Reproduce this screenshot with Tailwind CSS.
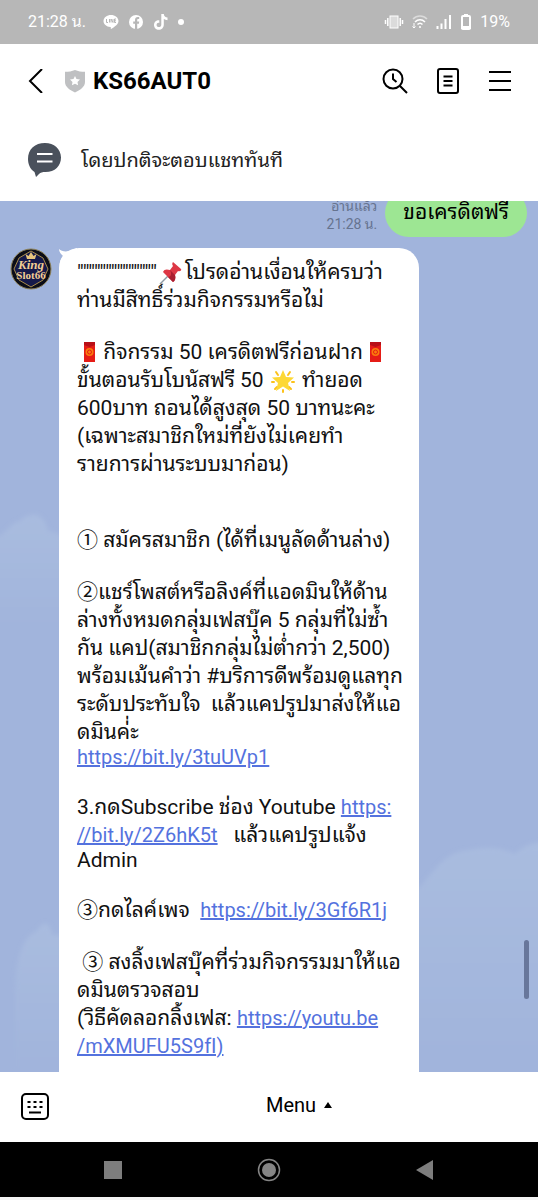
<!DOCTYPE html>
<html lang="th">
<head>
    <meta charset="UTF-8">
    <meta name="viewport" content="width=device-width, initial-scale=1.0">
    <title>KS66AUT0</title>
    <script src="https://cdn.jsdelivr.net/npm/@tailwindcss/browser@4"></script>
</head>
<body class="h-screen flex flex-col bg-white text-black font-[Roboto,'Noto_Sans_Thai_Looped','Noto_Looped_Thai',Loma,Waree,Garuda,'Noto_Sans_Thai','Noto_Sans_CJK_JP',sans-serif]">
    <!-- Status bar -->
    <div class="h-11 shrink-0 flex items-center justify-between px-7 bg-[#b7b7b7] text-white">
        <div class="flex items-center gap-[9px]">
            <span class="text-base mr-2">21:28 น.</span>
            <svg class="w-4 h-4" viewBox="0 0 16 16">
                <path fill="#fff" d="M8 1c4 0 7.500 2.600 7.500 6 0 2.200-1.600 3.900-3.500 5.300-1.500 1.200-3.100 2.400-3.800 2.700-.5.200-.5-.3-.4-.8.100-.6.100-1-.5-1.100C3.400 12.700.5 10.200.5 7 .5 3.600 4 1 8 1z"/>
                <path stroke="#b7b7b7" fill="none" d="M3.500 5v3.500H5M6.500 5v3.500M8 8.500V5l2 3.500V5M13 5h-1.500v3.500H13M11.500 6.800H13"/>
            </svg>
            <svg class="w-4 h-4" viewBox="0 0 16 16">
                <circle cx="8" cy="8" r="7" fill="#fff"/>
                <path fill="#b7b7b7" d="M7 15V9.700H5.200V7.600H7V6c0-1.900 1.100-2.900 2.700-2.900.8 0 1.500.1 1.500.1V5h-.9c-.8 0-1.100.5-1.100 1.100v1.500h2l-.3 2.100H9.200V15z"/>
            </svg>
            <svg class="w-4 h-4" viewBox="0 0 16 16">
                <path fill="#fff" d="M8.300 0h2.500c.2 2 1.500 3.400 3.700 3.600v2.600c-1.400 0-2.600-.4-3.700-1.100v5.300c0 3.200-2.300 5.400-5 5.400S1 13.500 1 10.900c0-2.900 2.400-5 5.300-4.700v2.700c-1.500-.4-2.700.6-2.700 2s1 2.200 2.200 2.200c1.500 0 2.500-1 2.500-2.700z"/>
            </svg>
            <span class="size-[6px] rounded-full bg-white"></span>
        </div>
        <div class="flex items-center gap-2">
            <svg class="w-5 h-4" viewBox="0 0 20 16" stroke="#fff" fill="none">
                <rect x="6" y="2" width="8" height="12" fill="#fff" fill-opacity=".5"/>
                <path stroke-width="1.500" d="M3.800 4v8M16.200 4v8M1.500 6v4M18.500 6v4"/>
            </svg>
            <svg class="w-4 h-4" viewBox="0 0 16 16" stroke="#fff" fill="none" stroke-width="1.600">
                <path opacity=".5" d="M1 5c4-4 10-4 14 0"/>
                <path d="M3 8c3-3 7-3 10 0M5.500 10.500c1.500-1.500 3.500-1.500 5 0"/>
                <circle cx="8" cy="13" r="1" fill="#fff" stroke="none"/>
                <path stroke-width="1" d="M2 9v5M.5 12.500L2 14l1.500-1.500"/>
            </svg>
            <svg class="w-4 h-4" viewBox="0 0 16 16" stroke="#fff" stroke-width="2">
                <path d="M1.500 15v-3M5.500 15V9.500M9.500 15V5M14 15V1"/>
            </svg>
            <svg class="w-3 h-4" viewBox="0 0 12 16">
                <path fill="#fff" d="M4 0h4v1.500H4zM1 12h10v3H1z"/>
                <rect x="2" y="2" width="8" height="13" rx="1" fill="none" stroke="#fff" stroke-width="2"/>
            </svg>
            <span class="text-base">19%</span>
        </div>
    </div>

    <!-- Chat header -->
    <header class="h-[74px] shrink-0 flex items-center pl-7 pr-[26px]">
        <button type="button" aria-label="Back">
            <svg class="w-4 h-6" viewBox="0 0 16 24" fill="none" stroke="#000" stroke-width="2"><path d="M14 0L2 12l12 12"/></svg>
        </button>
        <svg class="w-5 h-6 ml-[21px]" viewBox="0 0 20 24">
            <path fill="#bfc0c2" d="M10 1c3 1.300 6.500 1.800 10 1.800V13c0 5-5 8-10 10.500C5 21 0 18 0 13V2.800C3.500 2.800 7 2.300 10 1z"/>
            <path fill="#fff" d="M10 7l1.500 3 3.500.5-2.500 2.400.6 3.400L10 14.700l-3.100 1.600.6-3.400L5 10.500l3.500-.5z"/>
        </svg>
        <h1 class="ml-2 text-2xl font-bold">KS66AUT0</h1>
        <div class="ml-auto flex items-center gap-7">
            <button type="button" aria-label="Search">
                <svg class="w-[26px] h-[26px]" viewBox="0 0 26 26" fill="none" stroke="#000" stroke-width="2">
                    <circle cx="11" cy="11" r="9.500"/>
                    <path d="M11 5.500V11l3.500 3M18 18l7 7"/>
                </svg>
            </button>
            <button type="button" aria-label="Notes">
                <svg class="w-6 h-[26px]" viewBox="0 0 24 26" fill="none" stroke="#000" stroke-width="2">
                    <rect x="2" y="1" width="20" height="24" rx="2"/>
                    <path d="M7.500 8.500h9M7.500 13h9M7.500 17.500h9"/>
                </svg>
            </button>
            <button type="button" aria-label="More">
                <svg class="w-6 h-[26px]" viewBox="0 0 24 26" stroke="#000" stroke-width="2"><path d="M1 4h22M1 13h22M1 22h22"/></svg>
            </button>
        </div>
    </header>
    <div class="h-[83px] shrink-0 flex items-center gap-5 pl-7">
        <svg class="w-[33px] h-[34px]" viewBox="0 0 33 34">
            <path fill="#4a515c" d="M17 0c9 0 16 6 16 14.500S27 29 17.500 29c-3 0-5 .5-6.500 2l-3 3-1.500-5C2 26 0 21 0 16 0 6 7 0 17 0z"/>
            <path stroke="#fff" stroke-width="2" d="M9 11h15.500M9 18.500h15.500"/>
        </svg>
        <p class="text-xl text-[#222]">โดยปกติจะตอบแชททันที</p>
    </div>

    <!-- Messages -->
    <main class="relative flex-1 min-h-0 flex flex-col overflow-hidden bg-[#a1b4dc]">
        <svg class="absolute inset-0 w-full h-full" viewBox="0 0 538 871" preserveAspectRatio="none">
            <defs>
                <linearGradient id="cloud" x1="0" y1="0" x2="0" y2="1">
                    <stop offset="0" stop-color="#a9bcdf"/>
                    <stop offset="1" stop-color="#a1b4dc"/>
                </linearGradient>
                <filter id="soft"><feGaussianBlur stdDeviation="2"/></filter>
            </defs>
            <g fill="url(#cloud)" filter="url(#soft)">
                <path d="M-10 340C5 335 10 322 20 320c12-12 25-6 28 10 10 0 20 10 30 20v80H-10z"/>
                <path d="M15 800c0-50 10-65 22-70 8-14 14-6 15 4h30v137H15z"/>
                <path d="M410 695c20-15 30-45 60-46 15-3 30-3 45 4 12-10 20-14 40-10v220H410z"/>
            </g>
        </svg>

        <div class="relative -mt-3 pr-[11px] flex shrink-0 items-end justify-end gap-2">
            <div class="mb-1 text-right text-sm leading-[18px] text-[#66738f]">
                <p>อ่านแล้ว</p>
                <p>21:28 น.</p>
            </div>
            <p class="h-12 px-[18px] flex items-center rounded-3xl bg-[#9de693] text-[21px]">ขอเครดิตฟรี</p>
        </div>

        <div class="relative mt-[11px] pl-[10px] flex flex-1">
            <svg class="size-[42px] shrink-0" viewBox="0 0 42 42" role="img" aria-label="King Slot66">
                <circle cx="21" cy="21" r="20" fill="#0b0d18" stroke="#8d8158"/>
                <path fill="#15194a" stroke="#a98c4b" d="M21 3l12 7 5 11-5 11-12 7-12-7-5-11 5-11z"/>
                <path fill="#e6c47e" d="M17 11l-1.500-5L18.500 8 21 4l2.500 4 3-2L25 11z"/>
                <g fill="#f0cd95" font-family="Liberation Serif" font-weight="bold" text-anchor="middle">
                    <text x="21" y="21" font-size="13" font-style="italic">King</text>
                    <text x="21" y="31" font-size="11">Slot66</text>
                </g>
            </svg>
            <div class="relative ml-[7px] w-[360px] rounded-t-[20px] bg-white px-[18px] pt-[10px] text-[21px] leading-7 text-[#111] [&>p]:whitespace-pre [&_a]:text-[20px] [&_a]:text-[#5472de] [&_a]:underline">
                <svg class="absolute left-0 top-0 w-5 h-5" viewBox="0 0 20 20"><path fill="#fff" d="M0 1c2 2 6 3 10 2l8-3v12L1 20C0 13 3 9 4 8 2 6 0 4 0 1z"/></svg>
                <p>""""""""""""""<svg class="inline-block size-6 mx-[2px] align-[-6px]" viewBox="0 0 24 24" role="img" aria-label="📌"><path stroke="#8d9ba5" stroke-width="1.500" d="M1 23l8-8"/><path fill="#dd3745" d="M14 1l8 7c1 1-1 3-3 2l-3 4c1 3 0 6-2 7L4 11c1-3 4-3 7-2l3-4c-1-1-1-3 0-4z"/><path fill="#a91f31" d="M11 9l5 5c1 3 0 6-2 7l-5-5c3 0 4-3 2-7z"/></svg>โปรดอ่านเงื่อนให้ครบว่า
ท่านมีสิทธิ์ร่วมกิจกรรมหรือไม่</p>
                <p class="mt-6"><svg class="inline-block w-[21px] h-6 align-[-5px]" viewBox="0 0 21 24" role="img" aria-label="🧧"><path fill="#e51c16" d="M7 2h11v20H7z"/><path fill="#b80f17" d="M7 2h11v3l-5.500 2L7 5z"/><circle cx="12.500" cy="12" r="4" fill="#fa7d0c"/><circle cx="12.500" cy="12" r="2" fill="none" stroke="#e51c16"/></svg> กิจกรรม 50 เครดิตฟรีก่อนฝาก<svg class="inline-block w-[21px] h-6 align-[-5px]" viewBox="0 0 21 24" role="img" aria-label="🧧"><path fill="#e51c16" d="M7 2h11v20H7z"/><path fill="#b80f17" d="M7 2h11v3l-5.500 2L7 5z"/><circle cx="12.500" cy="12" r="4" fill="#fa7d0c"/><circle cx="12.500" cy="12" r="2" fill="none" stroke="#e51c16"/></svg>
ขั้นตอนรับโบนัสฟรี 50 <svg class="inline-block size-6 mx-[2px] align-[-6px]" viewBox="0 0 24 24" role="img" aria-label="🌟"><path stroke="#fcc21b" stroke-width="2" stroke-linecap="round" d="M5 3l2 3M19 3l-2 3M1 13h2M21 13h2M4 20l2-2M20 20l-2-2M12 21v2"/><path fill="#fdd835" d="M12 1l3 7 8 .5-6 5.500 2 8-7-4.500L5 22l2-8-6-5.500L9 8z"/></svg> ทำยอด
600บาท ถอนได้สูงสุด 50 บาทนะคะ
(เฉพาะสมาชิกใหม่ที่ยังไม่เคยทำ
รายการผ่านระบบมาก่อน)</p>
                <p class="mt-12">① สมัครสมาชิก (ได้ที่เมนูลัดด้านล่าง)</p>
                <p class="mt-6">②แชร์โพสต์หรือลิงค์ที่แอดมินให้ด้าน
ล่างทั้งหมดกลุ่มเฟสบุ๊ค 5 กลุ่มที่ไม่ซ้ำ
กัน แคป(สมาชิกกลุ่มไม่ต่ำกว่า 2,500)
พร้อมเม้นคำว่า #บริการดีพร้อมดูแลทุก
ระดับประทับใจ  แล้วแคปรูปมาส่งให้แอ
ดมินค่่ะ</p>
                <p class="leading-[23px]"><a href="#">https://bit.ly/3tuUVp1</a></p>
                <p class="mt-6">3.กดSubscribe ช่อง Youtube <a href="#">https:
//bit.ly/2Z6hK5t</a>   แล้วแคปรูปแจ้ง</p>
                <p class="leading-[23px]">Admin</p>
                <p class="mt-6">③กดไลค์เพจ  <a href="#">https://bit.ly/3Gf6R1j</a></p>
                <p class="mt-6"> ③ สงลิ้งเฟสบุ๊คที่ร่วมกิจกรรมมาให้แอ
ดมินตรวจสอบ
(วิธีคัดลอกลิ้งเฟส: <a href="#">https://youtu.be
/mXMUFU5S9fI)</a></p>
            </div>
        </div>
        <!-- Scroll thumb -->
        <div class="absolute right-[9px] bottom-[73px] w-[5px] h-[59px] rounded-full bg-[#68779b]"></div>
    </main>

    <!-- Input bar -->
    <footer class="h-[70px] shrink-0 flex items-center pl-5">
        <button type="button" aria-label="Keyboard" class="w-10">
            <svg class="w-[30px] h-[28px]" viewBox="0 0 30 28" fill="none" stroke="#000" stroke-width="2">
                <rect x="2" y="1" width="26" height="25" rx="4"/>
                <path stroke-width="2" stroke-dasharray="3 3" d="M7.500 9h15M7.500 14h15"/>
                <path d="M9 19.500h12"/>
            </svg>
        </button>
        <button type="button" class="flex-1 pb-1 flex items-center justify-center gap-2 text-xl">
            Menu
            <svg class="w-2 h-[6px]" viewBox="0 0 8 6"><path d="M4 0l4 6H0z"/></svg>
        </button>
    </footer>

    <!-- Android navigation -->
    <nav class="h-[58px] shrink-0 border-b-[3px] border-[#f4f4f4] flex items-center justify-between px-[104px] bg-black">
        <button type="button" aria-label="Recents" class="size-[18px] bg-[#7d7d7d]"></button>
        <button type="button" aria-label="Home">
            <svg class="size-6" viewBox="0 0 24 24"><circle cx="12" cy="12" r="10.500" fill="none" stroke="#858585" stroke-width="1.500"/><circle cx="12" cy="12" r="7" fill="#858585"/></svg>
        </button>
        <button type="button" aria-label="Back">
            <svg class="w-[18px] h-5" viewBox="0 0 18 20"><path fill="#7d7d7d" d="M17 0v20L0 10z"/></svg>
        </button>
    </nav>
</body>
</html>
